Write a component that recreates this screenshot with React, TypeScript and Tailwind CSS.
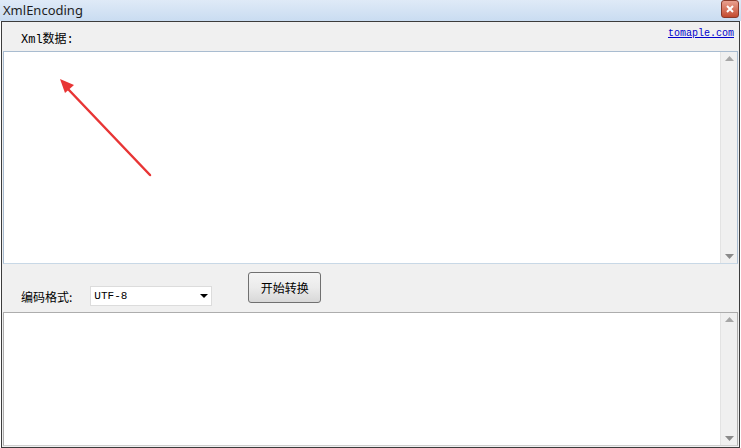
import React from "react";

const mono = { fontFamily: '"Liberation Mono", "Noto Sans CJK SC", monospace' };

function ScrollBar() {
    return (
        <div className="w-[17px] h-full bg-[#f0f0f0] border-l border-[#e3e3e3] flex flex-col justify-between items-center py-[4px]">
            <svg width="9" height="5" viewBox="0 0 9 5"><path d="M0 5 L4.5 0 L9 5 Z" fill="#a6a6a6"/></svg>
            <svg width="9" height="5" viewBox="0 0 9 5"><path d="M0 0 L4.5 5 L9 0 Z" fill="#8a8a8a"/></svg>
        </div>
    );
}

export default function App() {
    return (
        <div className="w-[741px] h-[448px] bg-white relative overflow-hidden" style={mono}>
            {/* Title bar */}
            <div className="h-[21px] flex items-center justify-between bg-gradient-to-b from-[#dfeaf7] to-[#c9dcf1]">
                <span className="pl-[3px] text-[13px] text-[#1e1e1e]" style={{fontFamily: '"Noto Sans", "Open Sans", sans-serif'}}>XmlEncoding</span>
                <div className="mr-[2px] mb-[3px] w-[18px] h-[18px] rounded-[3px] bg-gradient-to-b from-[#e8a08f] to-[#c34a2e] border border-[#8a3a2a] flex items-center justify-center">
                    <svg width="8" height="8" viewBox="0 0 8 8"><path d="M1 1 L7 7 M7 1 L1 7" stroke="white" strokeWidth="2"/></svg>
                </div>
            </div>

            {/* Window body */}
            <div className="h-[427px] mx-[1px] border border-[#3c3c3c] bg-[#f0f0f0] flex flex-col px-[1px] pb-[1px]">
                <div className="h-[29px] flex items-center justify-between pl-[18px] pr-[4px] text-[12px] text-black">
                    <span className="pt-[6px]">Xml数据:</span>
                    <a href="#" className="text-[10px] text-[#0000cc] underline self-start pt-[4px]">tomaple.com</a>
                </div>

                <div className="h-[213px] flex bg-white border border-[#a9bcd0] border-b-[#c8d8e6]">
                    <div className="flex-1"/>
                    <ScrollBar/>
                </div>

                <div className="h-[48px] flex items-start pl-[18px] text-[12px] text-black">
                    <span className="mt-[24px]" style={{fontFamily: '"Noto Sans CJK SC", sans-serif'}}>编码格式:</span>
                    <div className="ml-[18px] mt-[22px] w-[122px] h-[20px] bg-white border border-[#dcdcdc] flex items-center justify-between px-[3px]">
                        <span className="text-[11px]">UTF-8</span>
                        <svg width="8" height="4" viewBox="0 0 8 4"><path d="M0 0 L4 4 L8 0 Z" fill="#000"/></svg>
                    </div>
                    <button className="ml-[36px] mt-[8px] w-[73px] h-[31px] rounded-[3px] border border-[#707070] bg-gradient-to-b from-[#f4f4f4] via-[#ebebeb] to-[#d8d8d8] text-[12px]" style={{fontFamily: '"Noto Sans CJK SC", sans-serif'}}>
                        开始转换
                    </button>
                </div>

                <div className="flex-1 flex bg-white border border-[#adadad] border-b-[#d0d0d0]">
                    <div className="flex-1"/>
                    <ScrollBar/>
                </div>
            </div>

            {/* Red annotation arrow */}
            <svg className="absolute left-0 top-0 pointer-events-none" width="741" height="448">
                <path d="M150 175 L68 89" stroke="#e83535" strokeWidth="2.5" strokeLinecap="round"/>
                <path d="M60 79 L74 85 L65 93 Z" fill="#e83535"/>
            </svg>
        </div>
    );
}
